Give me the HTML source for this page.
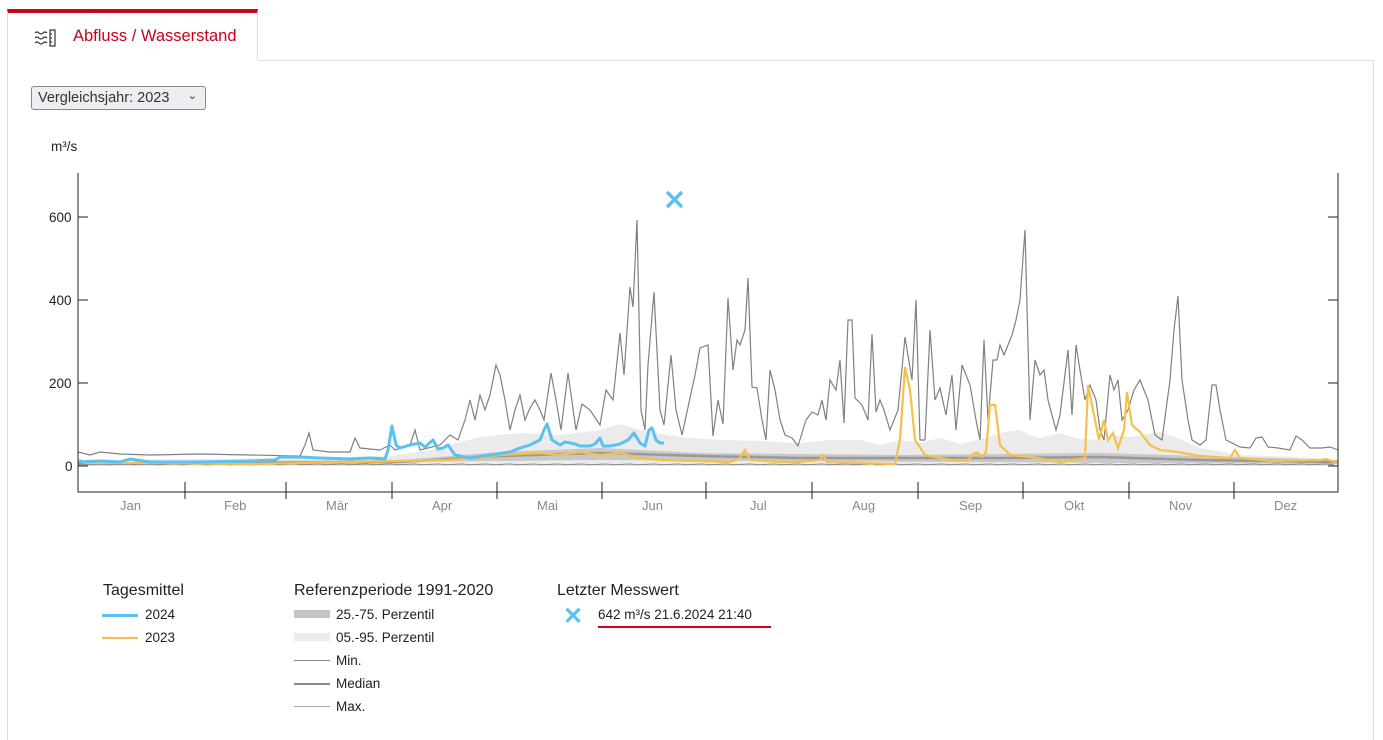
<!DOCTYPE html>
<html><head><meta charset="utf-8"><style>
body{margin:0;width:1383px;height:730px;background:#fff;font-family:"Liberation Sans",sans-serif;overflow:hidden;position:relative}
.tab{position:absolute;left:7px;top:9px;width:251px;height:51px;border-top:4px solid #d0021b;border-left:1px solid #ddd;border-right:1px solid #ddd;box-sizing:border-box;background:#fff}
.tab span{position:absolute;left:65px;top:14px;color:#c8001e;font-size:16.5px}
.line{position:absolute;left:258px;top:60px;right:9px;border-top:1px solid #ddd}
.pl{position:absolute;left:7px;top:60px;height:680px;border-left:1px solid #ddd}
.pr{position:absolute;left:1373px;top:60px;height:680px;border-left:1px solid #ddd}
.sel{position:absolute;left:31px;top:86px;width:175px;height:24px;border:1px solid #888;border-radius:3px;background:#eceef1;box-sizing:border-box;font-size:14.5px;color:#333;padding:3px 0 0 6px}
.t{position:absolute;font-size:13.5px;color:#222;white-space:nowrap}
.h{position:absolute;font-size:16px;color:#222}
.m{position:absolute;font-size:13px;color:#888}
</style></head><body>
<div class="tab"><svg style="position:absolute;left:26px;top:16px" width="24" height="18" viewBox="0 0 24 18" fill="none" stroke="#333" stroke-width="1.2"><path d="M1 4q2-2 4 0t4 0t4 0M1 9q2-2 4 0t4 0t4 0M1 14q2-2 4 0t4 0t4 0"/><rect x="16" y="1" width="5" height="16"/><path d="M16 5h2M16 9h2M16 13h2"/></svg><span>Abfluss / Wasserstand</span></div>
<div class="line"></div><div class="pl"></div><div class="pr"></div>
<div class="sel">Vergleichsjahr: 2023 <span style="position:absolute;right:8px;top:2px;font-size:11px">&#8964;</span></div>
<div class="t" style="left:51px;top:139px">m³/s</div>
<div class="t" style="left:49px;top:210px">600</div>
<div class="t" style="left:49px;top:293px">400</div>
<div class="t" style="left:49px;top:376px">200</div>
<div class="t" style="left:65px;top:459px">0</div>
<svg id="ch" style="position:absolute;left:0;top:0" width="1383" height="730"></svg>
<div class="m" style="left:120px;top:498px">Jan</div><div class="m" style="left:224px;top:498px">Feb</div><div class="m" style="left:326px;top:498px">Mär</div><div class="m" style="left:432px;top:498px">Apr</div><div class="m" style="left:537px;top:498px">Mai</div><div class="m" style="left:642px;top:498px">Jun</div><div class="m" style="left:750px;top:498px">Jul</div><div class="m" style="left:852px;top:498px">Aug</div><div class="m" style="left:959px;top:498px">Sep</div><div class="m" style="left:1064px;top:498px">Okt</div><div class="m" style="left:1169px;top:498px">Nov</div><div class="m" style="left:1274px;top:498px">Dez</div>
<div class="h" style="left:103px;top:582px">Tagesmittel</div>
<div style="position:absolute;left:102px;top:614px;width:36px;height:3px;background:#5bc0f2"></div><div class="t" style="left:145px;top:607px">2024</div>
<div style="position:absolute;left:102px;top:637px;width:36px;height:2px;background:#f7c04a"></div><div class="t" style="left:145px;top:630px">2023</div>
<div class="h" style="left:294px;top:582px">Referenzperiode 1991-2020</div>
<div style="position:absolute;left:294px;top:610px;width:36px;height:8px;background:#c4c4c4"></div><div class="t" style="left:336px;top:607px">25.-75. Perzentil</div>
<div style="position:absolute;left:294px;top:633px;width:36px;height:8px;background:#ebebeb"></div><div class="t" style="left:336px;top:630px">05.-95. Perzentil</div>
<div style="position:absolute;left:294px;top:660px;width:36px;height:1px;background:#888"></div><div class="t" style="left:336px;top:653px">Min.</div>
<div style="position:absolute;left:294px;top:683px;width:36px;height:2px;background:#8c8c8c"></div><div class="t" style="left:336px;top:676px">Median</div>
<div style="position:absolute;left:294px;top:706px;width:36px;height:1px;background:#aaa"></div><div class="t" style="left:336px;top:699px">Max.</div>
<div class="h" style="left:557px;top:582px">Letzter Messwert</div>
<div style="position:absolute;left:563px;top:602px;color:#5bc0f2;font-size:24px;font-weight:bold">✕</div>
<div class="t" style="left:598px;top:607px">642 m³/s 21.6.2024 21:40</div>
<div style="position:absolute;left:598px;top:626px;width:173px;height:2px;background:#d0021b"></div>
<script>
var s='';
function pts(a){var r=[];for(var i=0;i<a.length;i+=2)r.push(a[i]+','+a[i+1]);return r.join(' ');}
var p95=[78,460,300,458,390,456,430,450,480,437,520,433,560,435,600,430,620,424,640,430,680,437,720,440,760,441,800,443,830,440,860,440,880,445,900,440,920,443,940,438,960,444,990,437,1005,432,1020,430,1030,435,1040,438,1060,433,1080,439,1100,440,1115,435,1130,437,1160,432,1175,437,1200,448,1240,455,1300,457,1338,460];
s+='<polygon fill="#ebebeb" points="'+pts(p95)+' 1338,466 78,466"/>';
s+='<polygon fill="#c8c8c8" points="78,462 400,460 500,452 600,448 700,453 900,455 1100,453 1338,460 1338,464 600,460 78,465"/>';
s+='<polyline fill="none" stroke="#999" stroke-width="2.5" points="78,464 400,462 500,456 600,453 700,456 800,458 1000,458 1100,457 1200,460 1338,462"/>';
var mn=[];for(var x=78;x<=1338;x+=8){mn.push(x,464+((x*7)%3)*0.4);}
s+='<polyline fill="none" stroke="#888" stroke-width="1" points="'+pts(mn)+'"/>';
var mx=[78,452,90,455,100,452,120,454,150,455,200,454,250,455,300,456,305,445,309,433,313,450,330,452,350,452,355,438,360,448,380,450,390,445,395,450,410,445,415,430,420,450,440,445,450,435,458,440,465,420,470,400,475,420,480,395,485,410,490,395,496,365,500,375,505,400,510,430,515,410,520,395,525,420,530,408,535,400,540,410,544,420,551,373,556,400,561,430,568,373,576,430,582,404,590,410,600,425,606,390,613,400,620,333,624,375,630,287,633,307,637,220,641,410,645,430,648,365,654,292,660,410,664,425,671,355,676,410,682,435,695,375,700,348,708,345,713,436,718,400,723,424,728,298,733,370,737,340,740,345,745,330,748,278,752,387,757,388,762,420,766,440,770,370,775,390,780,420,785,435,792,438,798,446,806,420,812,412,818,415,822,400,826,420,830,380,836,390,840,360,844,423,848,320,852,320,855,398,862,405,868,420,872,334,876,412,880,400,884,410,890,430,898,410,905,337,912,380,916,300,920,440,925,440,930,330,935,400,940,388,946,415,952,375,956,430,962,365,966,375,970,385,976,420,980,440,984,340,988,420,993,360,997,360,1000,345,1004,355,1012,335,1016,320,1020,300,1025,230,1030,420,1035,360,1040,375,1044,370,1048,400,1056,430,1060,415,1068,350,1072,415,1076,345,1080,370,1085,400,1090,385,1096,400,1100,430,1104,440,1110,375,1114,390,1118,380,1122,420,1128,410,1134,390,1140,380,1148,400,1155,435,1162,440,1170,380,1174,330,1178,296,1182,380,1188,420,1192,440,1200,445,1206,440,1212,385,1216,385,1220,410,1226,440,1240,447,1250,448,1256,438,1262,437,1268,447,1278,448,1290,450,1296,436,1302,440,1310,448,1322,448,1330,447,1338,450];
s+='<polyline fill="none" stroke="#808080" stroke-width="1.2" points="'+pts(mx)+'"/>';
var or=[78,463,80,460,84,463,150,463,250,464,350,462,400,461,450,460,480,458,500,455,540,453,560,455,580,452,600,455,620,453,640,458,660,460,700,461,730,462,740,458,745,450,750,460,780,462,800,462,820,460,823,455,827,462,860,463,895,464,900,440,905,367,910,390,915,440,925,455,950,460,968,460,974,453,978,453,982,457,986,452,990,405,995,405,1000,445,1010,455,1030,457,1060,462,1085,458,1088,385,1095,420,1099,440,1104,420,1108,440,1113,433,1118,448,1124,430,1127,392,1132,425,1140,432,1150,445,1160,450,1178,452,1200,456,1230,458,1235,450,1240,458,1270,461,1320,460,1326,459,1338,463];
s+='<polyline fill="none" stroke="#f7c04a" stroke-width="2.2" points="'+pts(or)+'"/>';
var bl=[78,462,100,461,120,462,130,459,150,462,200,462,250,461,275,460,280,457,300,457,320,458,350,459,370,458,385,459,388,450,392,426,396,445,400,448,410,445,420,443,425,447,433,440,438,449,443,448,448,445,455,455,470,458,490,455,510,452,520,448,530,445,540,440,544,430,547,424,552,440,560,445,565,442,575,444,580,446,590,446,595,444,600,438,603,446,610,446,620,444,628,440,634,433,640,443,645,446,649,430,652,428,656,440,660,443,664,443];
s+='<polyline fill="none" stroke="#5bc0f2" stroke-width="3" stroke-linejoin="round" points="'+pts(bl)+'"/>';
s+='<path d="M78,173V492H1338V173" fill="none" stroke="#222" stroke-width="1"/>';
[217,300,383,466].forEach(function(y){s+='<path d="M78,'+y+'h10M1328,'+y+'h10" stroke="#222"/>';});
[185,286,392,497,602,706,812,918,1023,1129,1234].forEach(function(x){s+='<path d="M'+x+',482v17" stroke="#222"/>';});
s+='<path d="M667,192l15,15M682,192l-15,15" stroke="#5bc0f2" stroke-width="3.5"/>';
document.getElementById('ch').innerHTML=s;
</script>
</body></html>
